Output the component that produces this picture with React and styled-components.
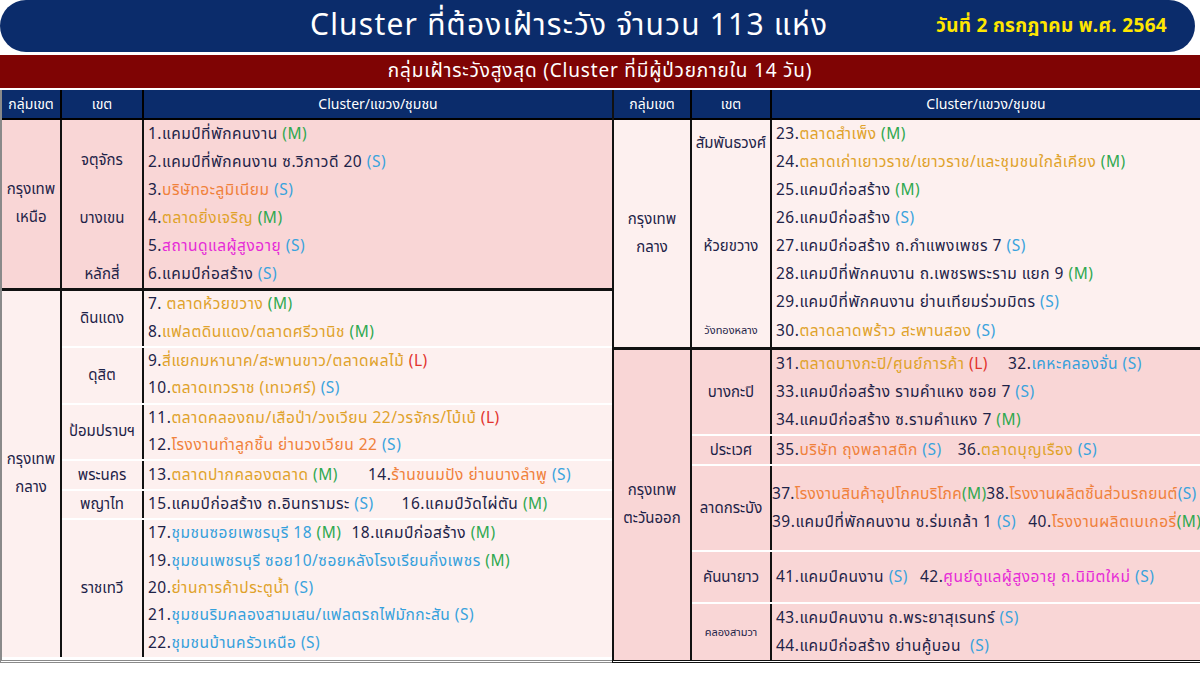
import React from "react"
import styled, { createGlobalStyle } from "styled-components"

const GlobalStyle = createGlobalStyle`
  html, body {
    margin: 0;
    padding: 0;
    background: #fff;
  }
  body {
    font-family: Tahoma, "Noto Sans Thai", "Noto Sans", "DejaVu Sans", sans-serif;
  }
`

const navy = "#0b2c6b"
const ink = "#1e2348"
const tones = { pink: "#f9d6d6", light: "#fdf0ef" }
const colors = {
  d: ink,
  M: "#2fa84f",
  S: "#3aa3dd",
  L: "#e2332d",
  o: "#f0813b",
  g: "#e0a22a",
  p: "#e62bd6",
  b: "#35a0dc",
}

const Page = styled.div`
  width: 1200px;
  height: 675px;
  overflow: hidden;
  display: flex;
  flex-direction: column;
  background: #fff;
`

const TitleBar = styled.div`
  height: 52px;
  margin-right: 5px;
  background: ${navy};
  border-radius: 26px;
  display: flex;
  align-items: center;
`

const Title = styled.div`
  margin-left: 310px;
  color: #fff;
  font-size: 30px;
  letter-spacing: 1.2px;
`

const DateText = styled.div`
  margin-left: auto;
  margin-right: 28px;
  color: #ffe600;
  font-size: 19px;
  font-weight: bold;
  letter-spacing: 0.3px;
`

const SubBar = styled.div`
  height: 33px;
  margin-top: 3px;
  background: #7f0404;
  color: #fff;
  font-size: 19px;
  letter-spacing: 0.8px;
  display: flex;
  align-items: center;
  justify-content: center;
`

const Tables = styled.div`
  display: flex;
  margin-top: 2px;
`

const Table = styled.div`
  width: ${(p) => p.$w}px;
  display: flex;
  flex-direction: column;
  border-left: 2px solid ${(p) => p.$edge};
  border-bottom: 3px double ${(p) => p.$edge};
  box-sizing: border-box;
`

const HeadRow = styled.div`
  display: grid;
  grid-template-columns: ${(p) => p.$cols};
  height: 28px;
  background: ${navy};
  color: #fff;
  font-size: 14px;
  border-bottom: 2px solid #000;
`

const HeadCell = styled.div`
  display: flex;
  align-items: center;
  justify-content: center;
  border-right: 2px solid #000;
  &:last-child {
    border-right: none;
  }
`

const Section = styled.div`
  display: grid;
  grid-template-columns: ${(p) => p.$group}px 1fr;
  background: ${(p) => tones[p.$tone]};
  & + & {
    border-top: ${(p) => p.$sep};
  }
`

const GroupCell = styled.div`
  display: flex;
  flex-direction: column;
  align-items: center;
  justify-content: center;
  border-right: 2px solid #111;
  color: ${ink};
  font-size: 15px;
  line-height: 28px;
  text-align: center;
`

const Districts = styled.div`
  display: flex;
  flex-direction: column;
`

const District = styled.div`
  display: grid;
  grid-template-columns: ${(p) => p.$w}px 1fr;
  min-height: ${(p) => p.$min || 0}px;
  &:not(:first-child) {
    border-top: ${(p) => (p.$divided ? "2px solid #fff" : "none")};
  }
`

const DistrictName = styled.div`
  display: flex;
  justify-content: center;
  align-items: ${(p) => p.$align || "center"};
  padding: ${(p) => p.$pad || "0"};
  border-right: 2px solid #111;
  color: ${ink};
  font-size: ${(p) => (p.$small ? 11 : 15)}px;
  white-space: nowrap;
`

const Lines = styled.div`
  display: flex;
  flex-direction: column;
  justify-content: center;
  padding-left: ${(p) => p.$indent ?? 4}px;
`

const Line = styled.div`
  height: ${(p) => p.$h}px;
  display: flex;
  align-items: center;
  gap: ${(p) => p.$gap || 0}px;
  font-size: 15.5px;
  white-space: pre;
  letter-spacing: ${(p) => p.$tight ?? 0.5}px;
`

const Seg = styled.span`
  color: ${(p) => colors[p.$c]};
`

function renderText(str) {
  const out = []
  const re = /\[(\w):([^\]]+)\]|\((M|S|L)\)/g
  let last = 0
  let k = 0
  let m
  while ((m = re.exec(str))) {
    if (m.index > last) out.push(<Seg key={k++} $c="d">{str.slice(last, m.index)}</Seg>)
    if (m[1]) out.push(<Seg key={k++} $c={m[1]}>{m[2]}</Seg>)
    else out.push(<Seg key={k++} $c={m[3]}>({m[3]})</Seg>)
    last = re.lastIndex
  }
  if (last < str.length) out.push(<Seg key={k++} $c="d">{str.slice(last)}</Seg>)
  return out
}

const leftData = [
  {
    group: ["กรุงเทพ", "เหนือ"],
    tone: "pink",
    divided: false,
    rowH: 28,
    districts: [
      { name: "จตุจักร", align: "flex-end", pad: "0 0 4px", lines: ["1.แคมป์ที่พักคนงาน (M)", "2.แคมป์ที่พักคนงาน ซ.วิภาวดี 20 (S)"] },
      { name: "บางเขน", lines: ["3.[o:บริษัทอะลูมิเนียม] (S)", "4.[g:ตลาดยิ่งเจริญ] (M)", "5.[p:สถานดูแลผู้สูงอายุ] (S)"] },
      { name: "หลักสี่", lines: ["6.แคมป์ก่อสร้าง (S)"] },
    ],
  },
  {
    group: ["กรุงเทพ", "กลาง"],
    tone: "light",
    divided: true,
    rowH: 27.4,
    districts: [
      { name: "ดินแดง", lines: ["7. [g:ตลาดห้วยขวาง] (M)", "8.[g:แฟลตดินแดง/ตลาดศรีวานิช] (M)"] },
      { name: "ดุสิต", lines: ["9.[g:สี่แยกมหานาค/สะพานขาว/ตลาดผลไม้] (L)", "10.[g:ตลาดเทวราช (เทเวศร์)] (S)"] },
      { name: "ป้อมปราบฯ", lines: ["11.[g:ตลาดคลองถม/เสือป่า/วงเวียน 22/วรจักร/โบ้เบ้] (L)", "12.[o:โรงงานทำลูกชิ้น ย่านวงเวียน 22] (S)"] },
      { name: "พระนคร", lines: [{ gap: 30, items: ["13.[g:ตลาดปากคลองตลาด] (M)", "14.[o:ร้านขนมปัง ย่านบางลำพู] (S)"] }] },
      { name: "พญาไท", lines: [{ gap: 28, items: ["15.แคมป์ก่อสร้าง ถ.อินทรามระ (S)", "16.แคมป์วัดไผ่ตัน (M)"] }] },
      {
        name: "ราชเทวี",
        lines: [
          { gap: 10, items: ["17.[b:ชุมชนซอยเพชรบุรี 18] (M)", "18.แคมป์ก่อสร้าง (M)"] },
          "19.[b:ชุมชนเพชรบุรี ซอย10/ซอยหลังโรงเรียนกิ่งเพชร] (M)",
          "20.[g:ย่านการค้าประตูน้ำ] (S)",
          "21.[b:ชุมชนริมคลองสามเสน/แฟลตรถไฟมักกะสัน] (S)",
          "22.[b:ชุมชนบ้านครัวเหนือ] (S)",
        ],
      },
    ],
  },
]

const rightData = [
  {
    group: ["กรุงเทพ", "กลาง"],
    tone: "light",
    divided: false,
    rowH: 28,
    districts: [
      { name: "สัมพันธวงศ์", align: "flex-start", pad: "12px 0 0", lines: ["23.[g:ตลาดสำเพ็ง] (M)", "24.[g:ตลาดเก่าเยาวราช/เยาวราช/และชุมชนใกล้เคียง] (M)"] },
      {
        name: "ห้วยขวาง",
        lines: [
          "25.แคมป์ก่อสร้าง (M)",
          "26.แคมป์ก่อสร้าง (S)",
          "27.แคมป์ก่อสร้าง ถ.กำแพงเพชร 7 (S)",
          "28.แคมป์ที่พักคนงาน ถ.เพชรพระราม แยก 9 (M)",
          "29.แคมป์ที่พักคนงาน ย่านเทียมร่วมมิตร (S)",
        ],
      },
      { name: "วังทองหลาง", small: true, align: "flex-end", pad: "0 0 8px", min: 31, lines: ["30.[g:ตลาดลาดพร้าว สะพานสอง] (S)"] },
    ],
  },
  {
    group: ["กรุงเทพ", "ตะวันออก"],
    tone: "pink",
    divided: true,
    rowH: 28,
    districts: [
      {
        name: "บางกะปิ",
        lines: [
          { gap: 20, items: ["31.[g:ตลาดบางกะปิ/ศูนย์การค้า] (L)", "32.[b:เคหะคลองจั่น] (S)"] },
          "33.แคมป์ก่อสร้าง รามคำแหง ซอย 7 (S)",
          "34.แคมป์ก่อสร้าง ซ.รามคำแหง 7 (M)",
        ],
      },
      { name: "ประเวศ", lines: [{ gap: 16, items: ["35.[o:บริษัท ถุงพลาสติก] (S)", "36.[g:ตลาดบุญเรือง] (S)"] }] },
      {
        name: "ลาดกระบัง",
        min: 84,
        indent: 0,
        lines: [
          { gap: 0, tight: 0.3, items: ["37.[o:โรงงานสินค้าอุปโภคบริโภค](M)", "38.[o:โรงงานผลิตชิ้นส่วนรถยนต์](S)"] },
          { gap: 12, items: ["39.แคมป์ที่พักคนงาน ซ.ร่มเกล้า 1 (S)", "40.[o:โรงงานผลิตเบเกอรี่](M)"] },
        ],
      },
      { name: "คันนายาว", min: 50, lines: [{ gap: 12, items: ["41.แคมป์คนงาน (S)", "42.[p:ศูนย์ดูแลผู้สูงอายุ ถ.นิมิตใหม่] (S)"] }] },
      { name: "คลองสามวา", small: true, min: 52, lines: ["43.แคมป์คนงาน ถ.พระยาสุเรนทร์ (S)", "44.แคมป์ก่อสร้าง ย่านคู้บอน  (S)"] },
    ],
  },
]

function ClusterTable({ width, cols, edge, sep, data }) {
  return (
    <Table $w={width} $edge={edge}>
      <HeadRow $cols={`${cols[0]}px ${cols[1]}px 1fr`}>
        <HeadCell>กลุ่มเขต</HeadCell>
        <HeadCell>เขต</HeadCell>
        <HeadCell>Cluster/แขวง/ชุมชน</HeadCell>
      </HeadRow>
      {data.map((sec, i) => (
        <Section key={i} $group={cols[0]} $tone={sec.tone} $sep={sep}>
          <GroupCell>
            {sec.group.map((g) => (
              <span key={g}>{g}</span>
            ))}
          </GroupCell>
          <Districts>
            {sec.districts.map((d) => (
              <District key={d.name} $w={cols[1]} $min={d.min} $divided={sec.divided}>
                <DistrictName $align={d.align} $pad={d.pad} $small={d.small}>
                  {d.name}
                </DistrictName>
                <Lines $indent={d.indent}>
                  {d.lines.map((ln, j) =>
                    typeof ln === "string" ? (
                      <Line key={j} $h={sec.rowH}>
                        {renderText(ln)}
                      </Line>
                    ) : (
                      <Line key={j} $h={sec.rowH} $gap={ln.gap} $tight={ln.tight}>
                        {ln.items.map((it, n) => (
                          <span key={n}>{renderText(it)}</span>
                        ))}
                      </Line>
                    )
                  )}
                </Lines>
              </District>
            ))}
          </Districts>
        </Section>
      ))}
    </Table>
  )
}

export default function App() {
  return (
    <Page>
      <GlobalStyle />
      <TitleBar>
        <Title>Cluster ที่ต้องเฝ้าระวัง จำนวน 113 แห่ง</Title>
        <DateText>วันที่ 2 กรกฎาคม พ.ศ. 2564</DateText>
      </TitleBar>
      <SubBar>กลุ่มเฝ้าระวังสูงสุด (Cluster ที่มีผู้ป่วยภายใน 14 วัน)</SubBar>
      <Tables>
        <ClusterTable width={612} cols={[60, 82]} edge="#8a8a8a" sep="2px solid #a8a8a8" data={leftData} />
        <ClusterTable width={588} cols={[78, 80]} edge="#111" sep="3px solid #111" data={rightData} />
      </Tables>
    </Page>
  )
}
